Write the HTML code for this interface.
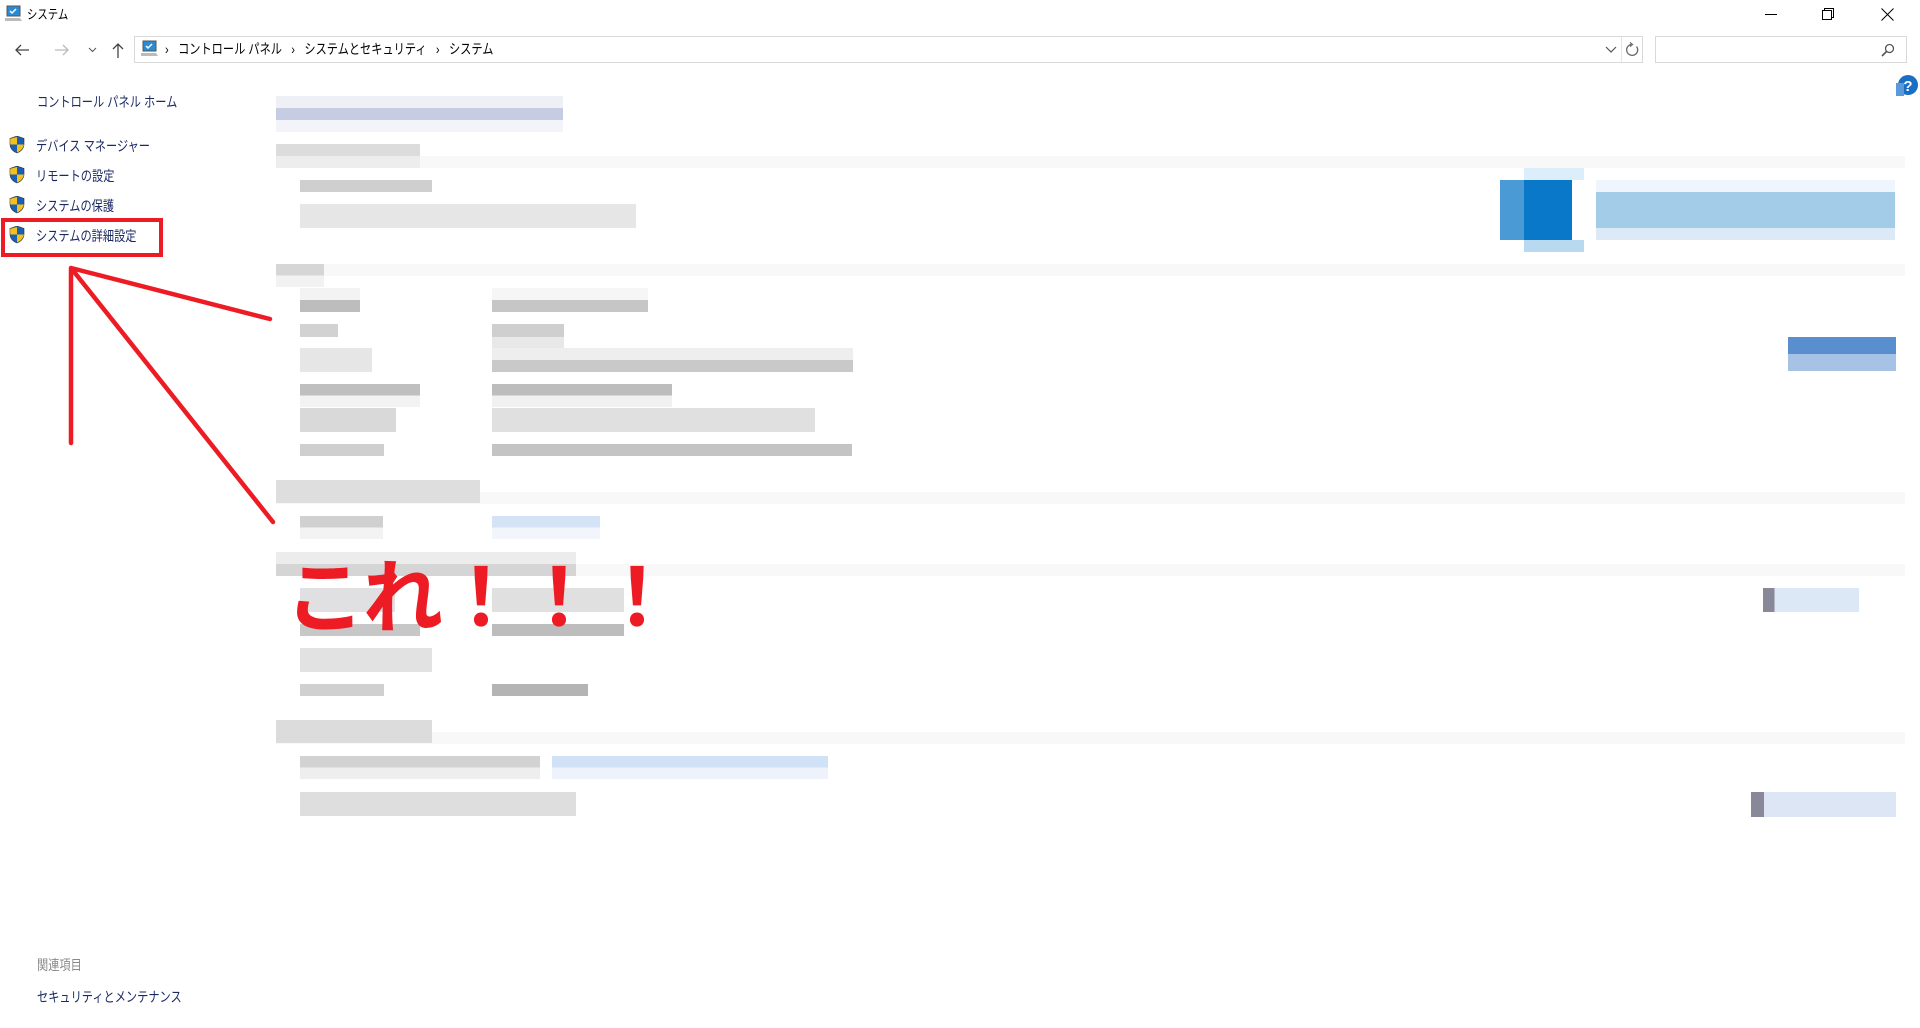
<!DOCTYPE html>
<html><head><meta charset="utf-8"><style>
*{margin:0;padding:0;box-sizing:border-box}
body{width:1920px;height:1028px;background:#fff;position:relative;overflow:hidden;font-family:"Liberation Sans","Noto Sans CJK JP",sans-serif;color:#000}
.a{position:absolute}
.t{font-size:14px;white-space:nowrap;line-height:18px;transform:scaleX(0.8);transform-origin:0 0}
.nav{color:#1b2a63;font-size:14px}
.b{position:absolute}
</style></head><body>
<svg class="a" style="left:4px;top:5px" width="20" height="18" viewBox="0 0 20 18"><rect x="3" y="1" width="13" height="10" fill="#2a8ad4" stroke="#555" stroke-width="1"/><path d="M6 6l2 2 4-4" stroke="#fff" stroke-width="1.5" fill="none"/><path d="M1 13h15l2 3H1z" fill="#bbb"/></svg>
<div class="a t" style="left:27px;top:6px;font-size:13px">システム</div>
<div class="a" style="left:1765px;top:14px;width:12px;height:1px;background:#000"></div>
<svg class="a" style="left:1822px;top:8px" width="12" height="12"><rect x="0.5" y="2.5" width="9" height="9" fill="none" stroke="#000"/><path d="M2.5 2.5V0.5h9v9h-2" fill="none" stroke="#000"/></svg>
<svg class="a" style="left:1881px;top:8px" width="13" height="13"><path d="M0.5 0.5L12.5 12.5M12.5 0.5L0.5 12.5" stroke="#000"/></svg>
<svg class="a" style="left:14px;top:43px" width="16" height="14"><path d="M15 7H2M7 2L2 7l5 5" stroke="#444" stroke-width="1.3" fill="none"/></svg>
<svg class="a" style="left:54px;top:43px" width="16" height="14"><path d="M1 7h13M9 2l5 5-5 5" stroke="#bbb" stroke-width="1.3" fill="none"/></svg>
<svg class="a" style="left:88px;top:47px" width="9" height="6"><path d="M1 1l3.5 3.5L8 1" stroke="#555" fill="none"/></svg>
<svg class="a" style="left:111px;top:42px" width="14" height="16"><path d="M7 16V2M2 7l5-5 5 5" stroke="#444" stroke-width="1.3" fill="none"/></svg>
<div class="a" style="left:134px;top:36px;width:1509px;height:27px;border:1px solid #d9d9d9"></div>
<div class="a" style="left:1621px;top:37px;width:1px;height:25px;background:#e5e5e5"></div>
<svg class="a" style="left:1605px;top:46px" width="12" height="8"><path d="M1 1l5 5 5-5" stroke="#555" stroke-width="1.2" fill="none"/></svg>
<svg class="a" style="left:1625px;top:42px" width="15" height="15"><path d="M11.5 4.5A5.5 5.5 0 1 1 6 2.5" stroke="#666" stroke-width="1.3" fill="none"/><path d="M5 0.5l2.5 2-2.5 2" stroke="#666" stroke-width="1.2" fill="none"/></svg>
<svg class="a" style="left:140px;top:40px" width="20" height="18"><rect x="3" y="1" width="13" height="10" fill="#2a8ad4" stroke="#555"/><path d="M6 6l2 2 4-4" stroke="#fff" stroke-width="1.5" fill="none"/><path d="M1 13h15l2 3H1z" fill="#bbb"/></svg>
<div class="a t" style="left:165px;top:40px;font-size:14px;color:#000">›&nbsp;&nbsp;&nbsp;コントロール パネル&nbsp;&nbsp;&nbsp;›&nbsp;&nbsp;&nbsp;システムとセキュリティ&nbsp;&nbsp;&nbsp;›&nbsp;&nbsp;&nbsp;システム</div>
<div class="a" style="left:1655px;top:36px;width:252px;height:27px;border:1px solid #d9d9d9"></div>
<svg class="a" style="left:1881px;top:43px" width="14" height="14"><circle cx="8.5" cy="5.5" r="4" stroke="#555" stroke-width="1.3" fill="none"/><path d="M5.5 8.5L1 13" stroke="#555" stroke-width="1.6"/></svg>
<svg class="a" style="left:1895px;top:74px" width="24" height="24"><circle cx="13" cy="11" r="10" fill="#1a6fc4"/><rect x="1" y="9" width="8" height="13" fill="#5a9ad8"/><text x="13" y="17" font-size="15" font-weight="bold" fill="#fff" text-anchor="middle" font-family="Liberation Sans">?</text></svg>
<div class="a t nav" style="left:37px;top:93px">コントロール パネル ホーム</div>
<svg width="0" height="0" style="position:absolute"><defs><g id="sh"><path d="M8 0L15 2.5V8C15 13 11 16 8 17 5 16 1 13 1 8V2.5z" fill="#1a5fb4" stroke="#333" stroke-width=".6"/><path d="M8 1V8.5H1.2V2.8zM8 8.5H14.8C14.5 12.5 11 15.5 8 16.5z" fill="#f4c020"/></g></defs></svg>
<svg class="a" style="left:9px;top:136px" width="16" height="18"><use href="#sh"/></svg>
<svg class="a" style="left:9px;top:166px" width="16" height="18"><use href="#sh"/></svg>
<svg class="a" style="left:9px;top:196px" width="16" height="18"><use href="#sh"/></svg>
<svg class="a" style="left:9px;top:226px" width="16" height="18"><use href="#sh"/></svg>
<div class="a t nav" style="left:36px;top:137px">デバイス マネージャー</div>
<div class="a t nav" style="left:36px;top:167px">リモートの設定</div>
<div class="a t nav" style="left:36px;top:197px">システムの保護</div>
<div class="a t nav" style="left:36px;top:227px">システムの詳細設定</div>
<div class="a" style="left:1px;top:218px;width:162px;height:39px;border:4px solid #ed1c24"></div>
<div class="a t" style="left:37px;top:956px;color:#888">関連項目</div>
<div class="a t nav" style="left:37px;top:988px">セキュリティとメンテナンス</div>
<div class="b" style="left:276px;top:156px;width:1629px;height:12px;background:#f8f8f8"></div>
<div class="b" style="left:276px;top:264px;width:1629px;height:12px;background:#f8f8f8"></div>
<div class="b" style="left:276px;top:492px;width:1629px;height:12px;background:#f8f8f8"></div>
<div class="b" style="left:276px;top:564px;width:1629px;height:12px;background:#f8f8f8"></div>
<div class="b" style="left:276px;top:732px;width:1629px;height:12px;background:#f8f8f8"></div>
<div class="b" style="left:276px;top:96px;width:287px;height:36px;background:linear-gradient(#eef0f6 0 33%,#c6cde3 33% 66%,#f3f4f9 66%)"></div>
<div class="b" style="left:276px;top:144px;width:144px;height:24px;background:linear-gradient(#dcdcdc 50%,#ededed 50%)"></div>
<div class="b" style="left:300px;top:180px;width:132px;height:12px;background:#cfcfd0"></div>
<div class="b" style="left:300px;top:204px;width:336px;height:24px;background:#e6e6e6"></div>
<div class="b" style="left:276px;top:264px;width:48px;height:23px;background:linear-gradient(#d6d6d6 50%,#f2f2f2 50%)"></div>
<div class="b" style="left:300px;top:288px;width:60px;height:24px;background:linear-gradient(#f3f3f3 50%,#bdbdbd 50%)"></div>
<div class="b" style="left:492px;top:288px;width:156px;height:24px;background:linear-gradient(#f6f6f6 50%,#c6c6c6 50%)"></div>
<div class="b" style="left:300px;top:324px;width:38px;height:13px;background:#d2d2d2"></div>
<div class="b" style="left:492px;top:324px;width:72px;height:26px;background:linear-gradient(#cfcfcf 50%,#e8e8e8 50%)"></div>
<div class="b" style="left:300px;top:348px;width:72px;height:24px;background:#e6e6e6"></div>
<div class="b" style="left:492px;top:348px;width:361px;height:24px;background:linear-gradient(#eeeeee 50%,#c9c9c9 50%)"></div>
<div class="b" style="left:300px;top:384px;width:120px;height:23px;background:linear-gradient(#bfbfbf 50%,#f3f3f3 50%)"></div>
<div class="b" style="left:492px;top:384px;width:180px;height:23px;background:linear-gradient(#bdbdbd 50%,#f1f1f1 50%)"></div>
<div class="b" style="left:300px;top:408px;width:96px;height:24px;background:#d9d9d9"></div>
<div class="b" style="left:492px;top:408px;width:323px;height:24px;background:#e0e0e0"></div>
<div class="b" style="left:300px;top:444px;width:84px;height:12px;background:#cfcfcf"></div>
<div class="b" style="left:492px;top:444px;width:360px;height:12px;background:#c4c4c4"></div>
<div class="b" style="left:276px;top:480px;width:204px;height:23px;background:#dedede"></div>
<div class="b" style="left:300px;top:516px;width:83px;height:23px;background:linear-gradient(#d0d0d0 50%,#f3f3f3 50%)"></div>
<div class="b" style="left:492px;top:516px;width:108px;height:23px;background:linear-gradient(#d4e3f5 50%,#f2f6fc 50%)"></div>
<div class="b" style="left:276px;top:552px;width:300px;height:24px;background:linear-gradient(#ececec 50%,#d5d5d5 50%)"></div>
<div class="b" style="left:300px;top:588px;width:95px;height:24px;background:#e0e0e2"></div>
<div class="b" style="left:492px;top:588px;width:132px;height:24px;background:#e0e0e0"></div>
<div class="b" style="left:300px;top:624px;width:120px;height:12px;background:#c7c7c7"></div>
<div class="b" style="left:492px;top:624px;width:132px;height:12px;background:#bdbdbd"></div>
<div class="b" style="left:300px;top:648px;width:132px;height:24px;background:#e2e2e2"></div>
<div class="b" style="left:300px;top:684px;width:84px;height:12px;background:#d0d0d0"></div>
<div class="b" style="left:492px;top:684px;width:96px;height:12px;background:#b4b4b4"></div>
<div class="b" style="left:276px;top:720px;width:156px;height:23px;background:#dcdcdc"></div>
<div class="b" style="left:300px;top:756px;width:240px;height:23px;background:linear-gradient(#d2d2d2 50%,#eeeeee 50%)"></div>
<div class="b" style="left:552px;top:756px;width:276px;height:23px;background:linear-gradient(#d2e2f6 50%,#eef3fb 50%)"></div>
<div class="b" style="left:300px;top:792px;width:276px;height:24px;background:#dedede"></div>
<div class="b" style="left:1500px;top:180px;width:72px;height:60px;background:#0a78c8"></div>
<div class="b" style="left:1500px;top:180px;width:24px;height:60px;background:#4a9ad6"></div>
<div class="b" style="left:1524px;top:168px;width:60px;height:12px;background:#dceefa"></div>
<div class="b" style="left:1524px;top:240px;width:60px;height:12px;background:#b8d9f0"></div>
<div class="b" style="left:1596px;top:180px;width:299px;height:60px;background:linear-gradient(#eef5fc 0 20%,#a3cce9 20% 80%,#dbeaf6 80%)"></div>
<div class="b" style="left:1788px;top:337px;width:108px;height:34px;background:linear-gradient(#5a8fcf 50%,#a6c3e6 50%)"></div>
<div class="b" style="left:1763px;top:588px;width:96px;height:24px;background:linear-gradient(90deg,#889 0 12%,#dde8f7 12%)"></div>
<div class="b" style="left:1751px;top:792px;width:145px;height:25px;background:linear-gradient(90deg,#889 0 9%,#dce6f4 9%)"></div>
<div class="a" style="left:285px;top:542px;font-size:80px;font-weight:bold;color:#ed1c24;font-family:'Noto Sans CJK JP',sans-serif;line-height:100px;letter-spacing:-2px;white-space:nowrap">これ！！！</div>
<svg class="a" style="left:0;top:0" width="400" height="600"><path d="M270 319L71 268L273 522M71 268V443" stroke="#ed1c24" stroke-width="4.5" fill="none" stroke-linecap="round" stroke-linejoin="round"/></svg>
</body></html>
